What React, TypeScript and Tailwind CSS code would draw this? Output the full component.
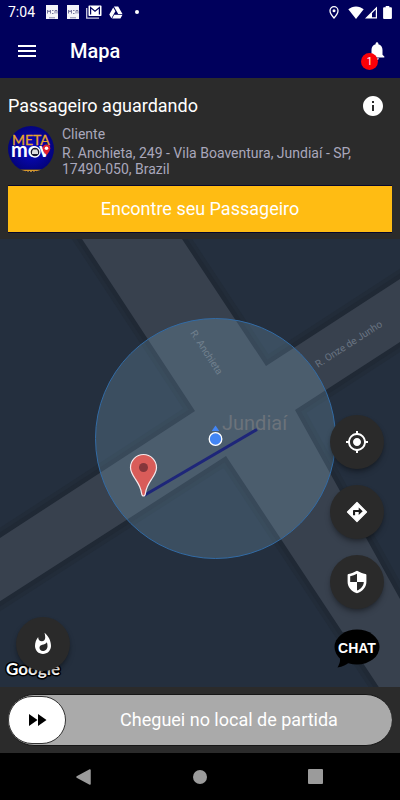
import { useState } from 'react';
import type { ReactNode } from 'react';
import {
  MdFastForward,
  MdInfo,
  MdMenu,
  MdMyLocation,
  MdNotifications,
  MdWhatshot,
} from 'react-icons/md';

function AppThumb() {
  return (
    <svg viewBox="0 0 12 14" className="w-3 h-3.5" aria-hidden="true">
      <rect width="12" height="14" fill="#f4f4fa" />
      <path d="M1.5 8.5V5l1.500 2 1.500-2v3.500M6 5.500h1.500M6 8.500h1.500M9 8.500v-3h2v3" fill="none" stroke="#77779f" strokeWidth="1" />
      <path d="M3 12.800h6" stroke="#8888aa" strokeWidth="1" />
    </svg>
  );
}

function StatusBar() {
  return (
    <div className="flex items-center h-6 px-2 text-white">
      <span className="text-sm leading-6 w-[38px]">7:04</span>
      <div className="flex items-center flex-1">
        <AppThumb />
        <span className="w-[9px]" />
        <AppThumb />
        <span className="w-[7px]" />
        {/* Gmail */}
        <svg viewBox="0 0 16 14" className="w-4 h-3.5" aria-hidden="true">
          <path d="M.7 3v10.2H13" fill="none" stroke="#c9c9dc" strokeWidth="1.3" />
          <path d="M3.5.5h11c.6 0 1 .4 1 1v8.5c0 .6-.4 1-1 1h-11c-.6 0-1-.4-1-1V1.500c0-.6.4-1 1-1z" fill="#fff" />
          <path d="M4.600 9.500V2.500L9 6.200l4.400-3.700v7" fill="none" stroke="#00005c" strokeWidth="1.200" />
        </svg>
        <span className="w-[7px]" />
        {/* Drive */}
        <svg viewBox="0 0 14 13" className="w-3.5 h-[13px]" aria-hidden="true">
          <path d="M4.900.5h4.300L13.500 8H9.200zM4.200 1.400l2.200 3.800L2.400 12.200.3 8.400zM5.200 8.800h8.300l-2.100 3.700H3.100z" fill="#fff" />
        </svg>
        <span className="w-3" />
        <span className="w-1 h-1 rounded-full bg-white" />
      </div>
      <div className="flex items-center">
        <svg viewBox="0 0 10 13" className="w-2.5 h-[13px]" aria-hidden="true">
          <path d="M5 .7c-2.300 0-4 1.800-4 4 0 2.900 4 7.300 4 7.300s4-4.400 4-7.300c0-2.200-1.700-4-4-4z" fill="none" stroke="#fff" strokeWidth="1.300" />
          <circle cx="5" cy="4.700" r="1.500" fill="#fff" />
        </svg>
        <span className="w-[9px]" />
        <svg viewBox="0 0 16 13" className="w-4 h-[13px]" aria-hidden="true">
          <path d="M8 13L.3 3.300C2.500 1.400 5.100.4 8 .4s5.500 1 7.700 2.900z" fill="#fff" />
        </svg>
        <svg viewBox="0 0 14 13" className="w-3.5 h-[13px]" aria-hidden="true">
          <path d="M13 .5v12H1z" fill="#fff" />
          <path d="M8 7.300l3.800-3.800v7.800H8z" fill="#00005c" />
        </svg>
        <span className="w-[5px]" />
        <svg viewBox="0 0 9 13" className="w-[9px] h-[13px]" aria-hidden="true">
          <path d="M2.700 0h3.600v1.300H8c.5 0 .9.400.9.900v9.900c0 .5-.4.900-.9.900H1c-.5 0-.9-.4-.9-.9V2.200c0-.5.400-.9.900-.9h1.700z" fill="#fff" />
        </svg>
      </div>
    </div>
  );
}

function Header() {
  return (
    <header className="bg-[#00005c]">
      <StatusBar />
      <div className="flex items-center h-[54px] pl-[15px] pr-3 text-white">
        <button type="button" aria-label="Menu" className="w-6 h-6">
          <MdMenu className="w-6 h-6" />
        </button>
        <h1 className="ml-[31px] flex-1 text-xl leading-6 font-medium">Mapa</h1>
        <button type="button" aria-label="Notificações" className="relative w-[22px] h-6">
          <MdNotifications className="w-[22px] h-[22px]" />
          <span className="absolute -left-[5px] top-3.5 flex items-center justify-center w-[17px] h-[17px] rounded-full bg-[#fb0007] text-[10px] leading-none">
            1
          </span>
        </button>
      </div>
    </header>
  );
}

function Avatar() {
  return (
    <svg viewBox="0 0 46 46" className="w-[46px] h-[46px] shrink-0" aria-label="Meta Mov">
      <defs>
        <radialGradient id="avatar">
          <stop offset="0" stopColor="#0a0ac8" />
          <stop offset="1" stopColor="#03037c" />
        </radialGradient>
        <clipPath id="disc">
          <circle cx="23" cy="23" r="23" />
        </clipPath>
      </defs>
      <g clipPath="url(#disc)">
        <rect width="46" height="46" fill="url(#avatar)" />
        <rect y="43.500" width="46" height="3" fill="#1c1c26" />
        <path d="M12 44.300h22" stroke="#d69a2c" strokeWidth="1.300" />
        <path d="M16 45.600h14" stroke="#c9963c" strokeWidth="1" strokeDasharray="2 1" />
      </g>
      <text x="4" y="19" fontSize="14" fill="#e7a52a" stroke="#e7a52a" strokeWidth=".3" className="font-[Lato]">
        META
      </text>
      <text x="3" y="31" fontSize="20" fill="#fff" className="font-[Lato] font-bold">mov</text>
      <circle cx="27" cy="26" r="5" fill="#17172b" stroke="#fff" strokeWidth="1.300" />
      <path d="M24 27v-1.500l1-2h4l1 2V28h-6z" fill="#ddd" />
      <path
        d="M38.500 18.500c-2.300 0-3.800 1.600-3.800 3.700 0 2.700 3.800 7 3.800 7s3.800-4.300 3.800-7c0-2.100-1.500-3.700-3.800-3.700z"
        fill="#e3202e"
      />
      <circle cx="38.500" cy="22.200" r="1.800" fill="#fff" />
    </svg>
  );
}

function PassengerPanel() {
  return (
    <section className="bg-[#2b2b2b] px-2 pt-4 pb-1.5">
      <div className="flex items-center justify-between pr-[7px]">
        <h2 className="text-lg leading-6 text-white">Passageiro aguardando</h2>
        <button type="button" aria-label="Informações">
          <MdInfo className="w-6 h-6 text-white" />
        </button>
      </div>
      <div className="flex mt-2 gap-2">
        <Avatar />
        <div className="text-sm leading-4 text-[#a9a7bb]">
          <p className="mb-[3px]">Cliente</p>
          <p>R. Anchieta, 249 - Vila Boaventura, Jundiaí - SP, 17490-050, Brazil</p>
        </div>
      </div>
      <button
        type="button"
        className="block w-full h-12 mt-2 border-y border-[#08082c] bg-[#ffbc13] text-lg text-white"
      >
        Encontre seu Passageiro
      </button>
    </section>
  );
}

const ROADS =
  'M82 0 L195 172 L-20 312 V375 L226 217 L392 468 H460 L295 171 L420 90 V27 L266 127 L182 0 V-20 H68 Z';

function MapCanvas() {
  return (
    <svg
      viewBox="0 0 400 448"
      preserveAspectRatio="xMidYMid slice"
      className="absolute inset-0 w-full h-full"
      aria-label="Mapa de Jundiaí"
    >
      <rect width="400" height="448" fill="#242f3e" />
      <path d={ROADS} fill="none" stroke="#222c39" strokeWidth="17" />
      <path d={ROADS} fill="none" stroke="#202935" strokeWidth="9" />
      <path d={ROADS} fill="#38414e" />
      <circle cx="215.500" cy="199.500" r="120" fill="#a5dcff" fillOpacity=".18" stroke="#326ba5" strokeWidth="1" />

      <text transform="translate(190 94) rotate(57)" fontSize="10" fill="#71808e">R. Anchieta</text>
      <text transform="translate(318 129) rotate(-33)" fontSize="10" fill="#697482">R. Onze de Junho</text>
      <text x="222" y="191" fontSize="20" fill="#6c737b">Jundiaí</text>

      <path d="M144 256.500L257 190.500" stroke="#1e2679" strokeWidth="3" />
      <path
        d="M143.500 257c-1.200 0-1.700-.9-1.900-2.600-.8-6.400-3.300-10-6.300-14.400-2.600-3.800-4.800-7.300-4.800-11.500 0-7.200 5.800-13 13-13s13 5.800 13 13c0 4.200-2.200 7.700-4.800 11.500-3 4.400-5.500 8-6.300 14.400-.2 1.700-.7 2.600-1.900 2.600z"
        fill="#d95c59"
        stroke="#f3e9ec"
        strokeWidth="1.200"
      />
      <circle cx="143.500" cy="228.500" r="4.500" fill="#84363b" />

      <path d="M215.500 186.500l3.800 5.500h-7.600z" fill="#4285f4" />
      <circle cx="215.500" cy="200" r="6.300" fill="#4285f4" stroke="#fff" strokeWidth="1.300" />
    </svg>
  );
}

function ShieldIcon() {
  return (
    <svg viewBox="0 0 24 24" className="w-6 h-6" fill="currentColor" fillRule="evenodd" aria-hidden="true">
      <path d="M12 .8C9.200 2.300 6.500 3.400 3.600 4c-.6.100-1 .5-1 1.100v6.600c0 5.200 3.700 9.600 9.400 11.500 5.700-1.900 9.400-6.300 9.400-11.500V5.100c0-.6-.4-1-1-1.100C17.500 3.400 14.800 2.300 12 .8zM12 3.700V12H5.200V6.200C7.600 5.700 9.800 4.800 12 3.700zM12 12h6.800c-.2 3.900-2.700 6.900-6.800 8.600z" />
    </svg>
  );
}

function DirectionsIcon() {
  return (
    <svg viewBox="0 0 24 24" className="w-6 h-6" aria-hidden="true">
      <path d="M12 2.500l9.500 9.500-9.500 9.500L2.500 12z" fill="#fff" stroke="#fff" strokeWidth="1.200" strokeLinejoin="round" />
      <path d="M8 15.300V11c0-.6.400-1 1-1h4.700V7.400l4 3.800-4 3.800v-2.900h-3.600v3.200z" fill="#1c1c1c" />
    </svg>
  );
}

function Fab({ label, children }: { label: string; children: ReactNode }) {
  return (
    <button
      type="button"
      aria-label={label}
      className="flex items-center justify-center w-[54px] h-[54px] rounded-full bg-[#2a2a2a] text-white shadow-md shadow-black/30"
    >
      {children}
    </button>
  );
}

function MapArea() {
  return (
    <main className="relative flex-1 min-h-96 overflow-hidden bg-[#242f3e]">
      <MapCanvas />

      <svg viewBox="0 0 64 26" className="absolute left-1 bottom-1 w-16 h-[26px]" aria-hidden="true">
        <text
          x="2"
          y="18"
          fontSize="17"
          fill="#fff"
          stroke="#000"
          strokeWidth="3"
          strokeLinejoin="round"
          paintOrder="stroke"
          className="font-[Lato] font-bold"
        >
          Google
        </text>
      </svg>

      <div className="absolute left-4 bottom-4">
        <Fab label="Mapa de calor">
          <MdWhatshot className="w-6 h-6" />
        </Fab>
      </div>

      <div className="absolute right-4 bottom-[18px] flex flex-col items-center gap-4">
        <Fab label="Minha localização">
          <MdMyLocation className="w-6 h-6" />
        </Fab>
        <Fab label="Rotas">
          <DirectionsIcon />
        </Fab>
        <Fab label="Segurança">
          <ShieldIcon />
        </Fab>
        <button type="button" aria-label="Chat">
          <svg viewBox="0 0 46 44" className="w-[46px] h-11">
            <ellipse cx="23" cy="22" rx="22.500" ry="17.500" fill="#000" />
            <path d="M5 31c2 4 1 7-1.500 11.500 5-.8 9-2.800 12-5.500z" fill="#000" />
            <text x="23" y="28" textAnchor="middle" fontSize="14" fill="#fff" className="font-['Liberation_Sans'] font-bold">
              CHAT
            </text>
          </svg>
        </button>
      </div>
    </main>
  );
}

function ArrivalSlider() {
  const [value, setValue] = useState(0);

  return (
    <section className="bg-[#2b2b2b] px-2 py-[7px]">
      <div className="relative flex items-center h-[52px] rounded-full border-y border-[#161616] bg-[#aaaaaa]">
        <span className="flex items-center justify-center w-[58px] h-12 rounded-full border border-[#333] bg-white text-black">
          <MdFastForward className="w-6 h-6" />
        </span>
        <label htmlFor="arrival" className="flex-1 text-center text-lg text-white">
          Cheguei no local de partida
        </label>
        <input
          id="arrival"
          type="range"
          min={0}
          max={100}
          value={value}
          onChange={(e) => setValue(Number(e.target.value))}
          className="absolute inset-0 w-full h-full opacity-0 cursor-pointer"
        />
      </div>
    </section>
  );
}

function SystemNav() {
  return (
    <nav className="flex items-center justify-center gap-[101px] h-[47px] pr-0.5 bg-black text-[#9b9b9b]">
      <button type="button" aria-label="Voltar">
        <svg viewBox="0 0 16 16" className="w-4 h-4">
          <path d="M14 1v14L1 8z" fill="currentColor" stroke="currentColor" strokeWidth="1.500" strokeLinejoin="round" />
        </svg>
      </button>
      <button type="button" aria-label="Início" className="w-3.5 h-3.5 rounded-full bg-[#9b9b9b]" />
      <button type="button" aria-label="Recentes" className="w-[15px] h-[15px] rounded-[1px] bg-[#9b9b9b]" />
    </nav>
  );
}

export default function App() {
  return (
    <div className="flex flex-col min-h-screen bg-[#2b2b2b] font-[Roboto,sans-serif]">
      <Header />
      <PassengerPanel />
      <MapArea />
      <ArrivalSlider />
      <SystemNav />
    </div>
  );
}
